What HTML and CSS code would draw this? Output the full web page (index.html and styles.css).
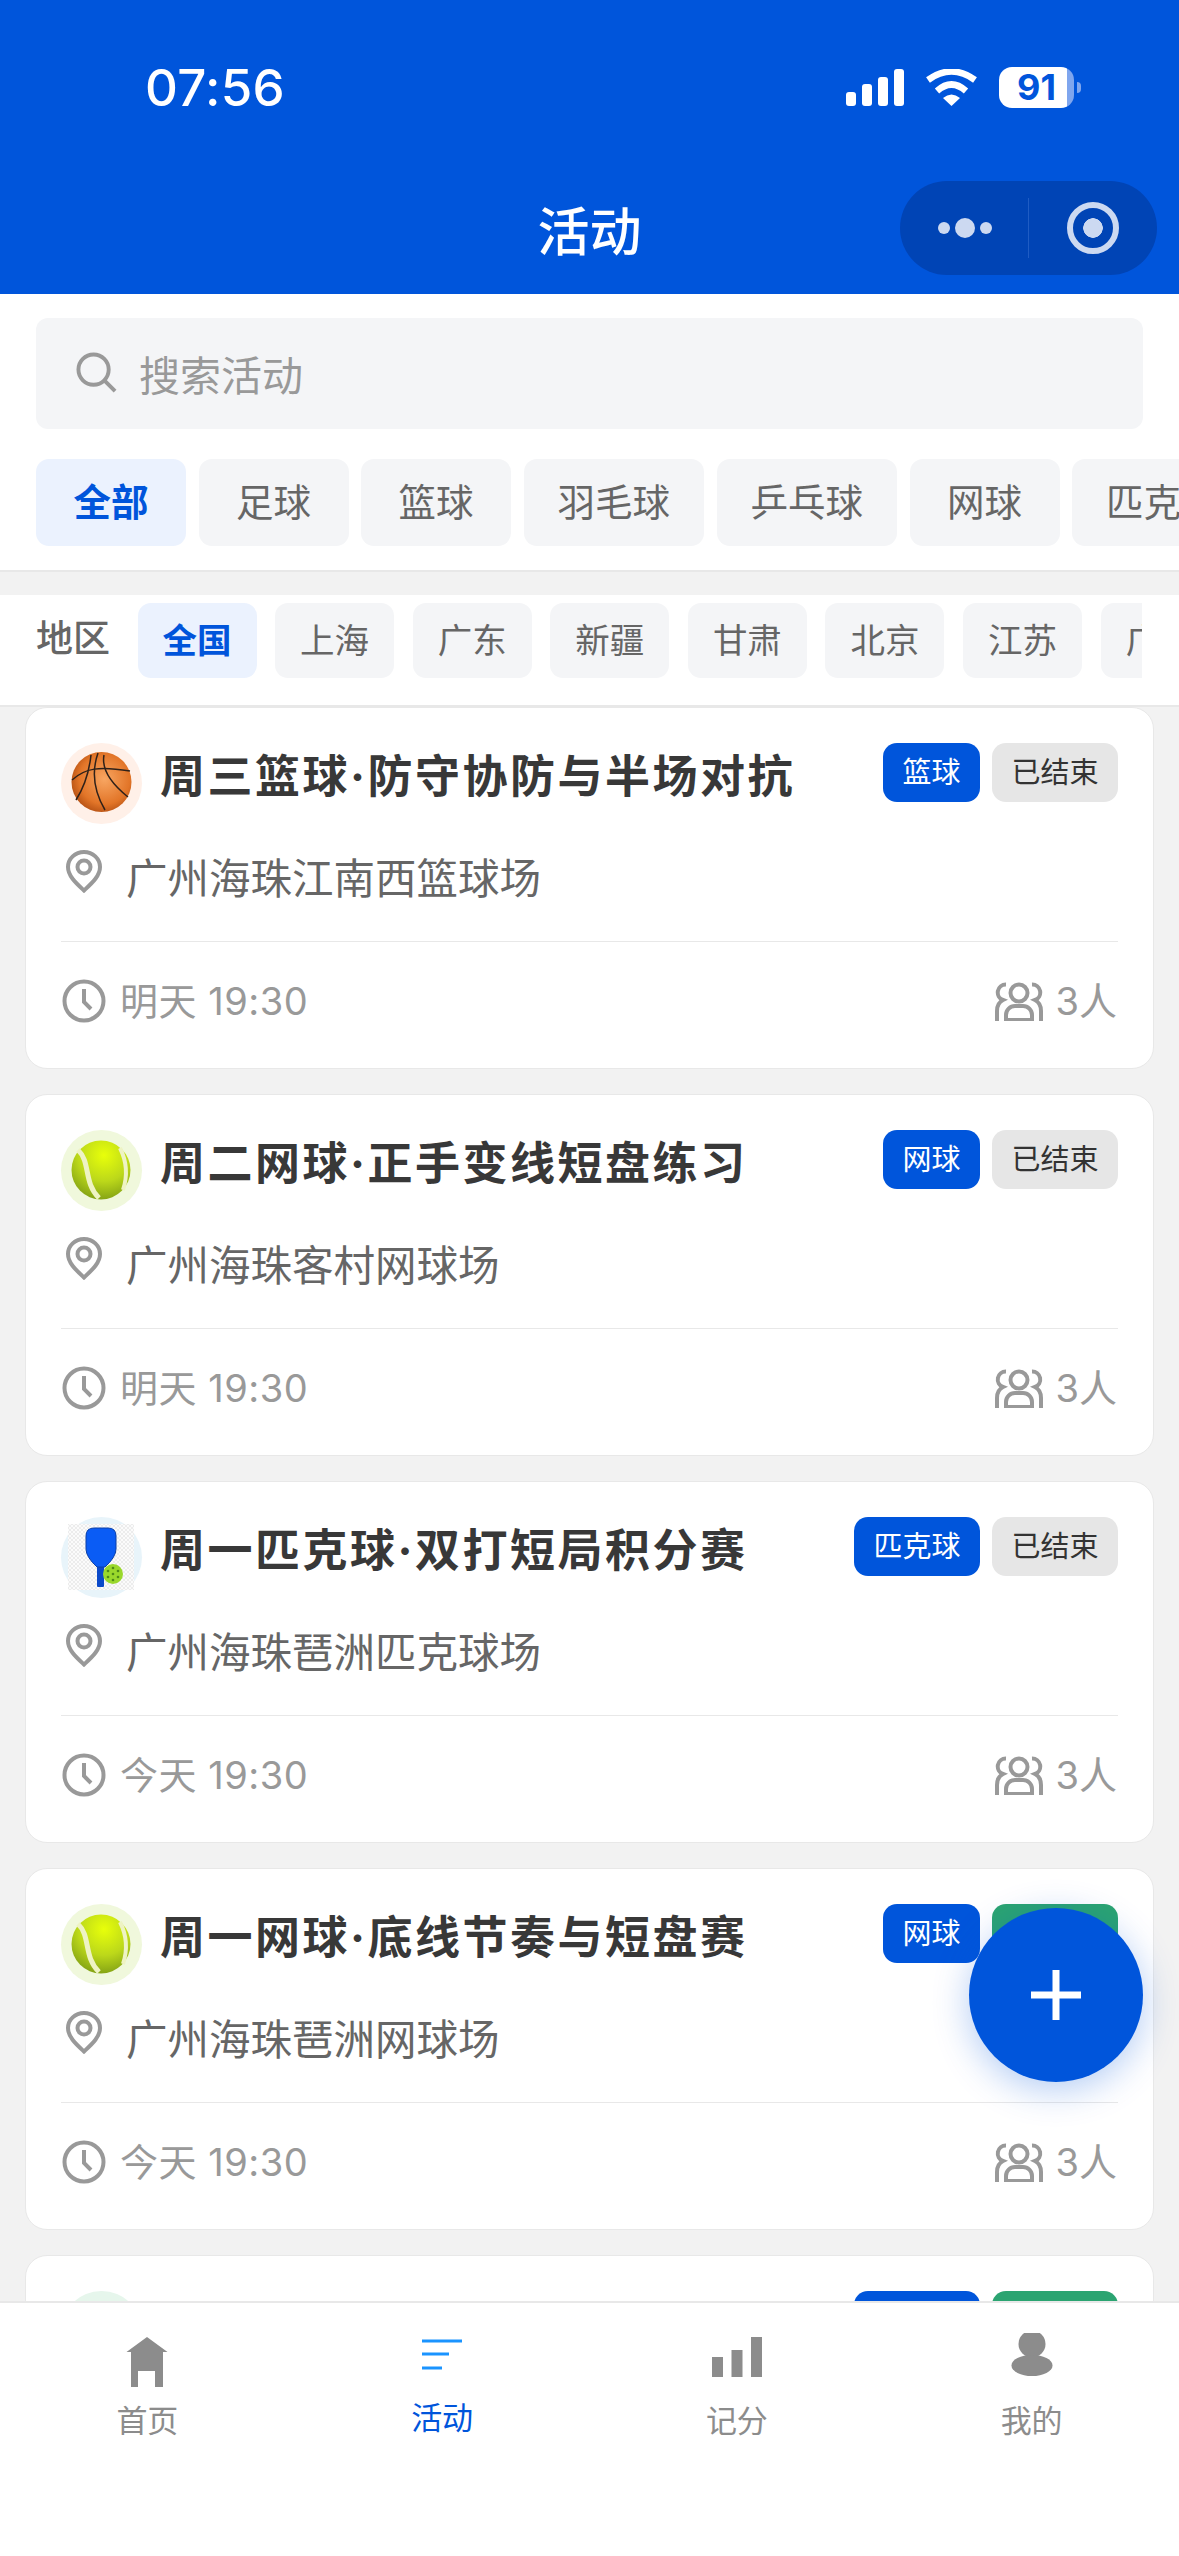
FILE: index.html
```html
<!DOCTYPE html>
<html lang="zh-CN">

<head>
    <meta charset="UTF-8">
    <meta name="viewport" content="width=device-width, initial-scale=1.0">
    <title>活动</title>
    <link rel="stylesheet" href="styles.css">
</head>

<body>
    <!-- shared icons -->
    <svg class="sprite" xmlns="http://www.w3.org/2000/svg">
        <defs>
            <radialGradient id="tennisFill" cx="0.55" cy="0.25" r="0.8">
                <stop offset="0" stop-color="#e8ff0a" />
                <stop offset="0.55" stop-color="#bcd81a" />
                <stop offset="1" stop-color="#7d9c14" />
            </radialGradient>
            <radialGradient id="ballFill" cx="0.55" cy="0.45" r="0.6">
                <stop offset="0" stop-color="#f8a662" />
                <stop offset="0.7" stop-color="#e27528" />
                <stop offset="1" stop-color="#b24e12" />
            </radialGradient>
            <pattern id="checker" width="4" height="4" patternUnits="userSpaceOnUse">
                <rect width="2" height="2" fill="#ececec" />
                <rect x="2" y="2" width="2" height="2" fill="#ececec" />
                <rect x="2" width="2" height="2" fill="#fbfbfb" />
                <rect y="2" width="2" height="2" fill="#fbfbfb" />
            </pattern>
        </defs>
        <symbol id="tennis" viewBox="0 0 81 81">
            <circle cx="40" cy="40" r="29.5" fill="url(#tennisFill)" />
            <path d="M17 20C30 32 22 52 38 68" fill="none" stroke="#eef3c4" stroke-width="5" />
            <path d="M59 18C67 34 66 48 62 60" fill="none" stroke="#eef3c4" stroke-width="4" />
        </symbol>
        <symbol id="pin" viewBox="0 0 46 43">
            <path d="M23 40.500C15 33 7 26 7 17A16 15 0 0 1 39 17C39 26 31 33 23 40.500Z" fill="none" stroke="#999" stroke-width="4" />
            <circle cx="23" cy="17" r="6.500" fill="none" stroke="#999" stroke-width="4" />
        </symbol>
        <symbol id="clock" viewBox="0 0 46 44">
            <circle cx="23" cy="22" r="19.500" fill="none" stroke="#999" stroke-width="4" />
            <path d="M23 10V23L30 30" fill="none" stroke="#999" stroke-width="4" />
        </symbol>
        <symbol id="users" viewBox="0 0 48 39">
            <g fill="none" stroke="#999" stroke-width="4">
                <circle cx="24" cy="11" r="8.500" />
                <path d="M11 38V33A9 9 0 0 1 20 24H28A9 9 0 0 1 37 33V38Z" />
                <path d="M11 2.500A8 8 0 0 0 8 18C4 20 2 24 2 29V39" />
                <path d="M37 2.500A8 8 0 0 1 40 18C44 20 46 24 46 29V39" />
            </g>
        </symbol>
    </svg>

    <div class="page">
        <header class="top">
            <div class="status">
                <span class="clock-time">07:56</span>
                <div class="status-icons">
                    <svg class="signal" viewBox="0 0 58 37">
                        <rect y="23" width="10" height="14" rx="3" fill="#fff" />
                        <rect x="16" y="15" width="10" height="22" rx="3" fill="#fff" />
                        <rect x="32" y="8" width="10" height="29" rx="3" fill="#fff" />
                        <rect x="48" width="10" height="37" rx="3" fill="#fff" />
                    </svg>
                    <svg class="wifi" viewBox="0 0 51 37">
                        <path d="M2 11Q25.500 -6 49 11" fill="none" stroke="#fff" stroke-width="6.500" />
                        <path d="M11 22Q25.500 9 40 22" fill="none" stroke="#fff" stroke-width="6.500" />
                        <path d="M17 29Q25.500 22 34 29L25.500 37Z" fill="#fff" />
                    </svg>
                    <div class="battery">
                        <div class="battery-body">91</div>
                        <div class="battery-nub"></div>
                    </div>
                </div>
            </div>
            <div class="navbar">
                <h1 class="nav-title">活动</h1>
                <div class="capsule">
                    <div class="capsule-dots">
                        <span class="dot"></span>
                        <span class="dot dot-big"></span>
                        <span class="dot"></span>
                    </div>
                    <div class="capsule-line"></div>
                    <div class="capsule-ring"></div>
                </div>
            </div>
        </header>

        <section class="filters">
            <div class="search">
                <svg class="search-icon" viewBox="0 0 42 42">
                    <circle cx="18" cy="18" r="15.500" fill="none" stroke="#999" stroke-width="4" />
                    <path d="M29 29L40 40" stroke="#999" stroke-width="4" />
                </svg>
                <span>搜索活动</span>
            </div>
            <div class="sport-tabs">
                <div class="chip active">全部</div>
                <div class="chip">足球</div>
                <div class="chip">篮球</div>
                <div class="chip">羽毛球</div>
                <div class="chip">乒乓球</div>
                <div class="chip">网球</div>
                <div class="chip">匹克球</div>
            </div>
        </section>

        <section class="region">
            <span class="region-label">地区</span>
            <div class="region-tabs">
                <div class="rchip active">全国</div>
                <div class="rchip">上海</div>
                <div class="rchip">广东</div>
                <div class="rchip">新疆</div>
                <div class="rchip">甘肃</div>
                <div class="rchip">北京</div>
                <div class="rchip">江苏</div>
                <div class="rchip">广西</div>
            </div>
        </section>

        <main class="list">
            <article class="card">
                <div class="card-head">
                    <div class="sport-icon bg-orange">
                        <svg viewBox="0 0 81 81">
                            <circle cx="40.500" cy="39" r="30" fill="url(#ballFill)" />
                            <g fill="none" stroke="#2f2119" stroke-width="1.500">
                                <path d="M30 12C28 30 22 46 15 57" />
                                <path d="M37 10C30 30 34 50 44 67" />
                                <path d="M11 37C24 25 38 23 69 28" />
                                <path d="M43 12C40 28 52 42 67 54" />
                            </g>
                        </svg>
                    </div>
                    <h2 class="card-title">周三篮球·防守协防与半场对抗</h2>
                    <div class="tags">
                        <span class="tag tag-blue">篮球</span>
                        <span class="tag tag-gray">已结束</span>
                    </div>
                </div>
                <div class="card-place">
                    <svg class="pin"><use href="#pin" /></svg>
                    <span>广州海珠江南西篮球场</span>
                </div>
                <div class="card-foot">
                    <div class="foot-time">
                        <svg class="clock"><use href="#clock" /></svg>
                        <span>明天 19:30</span>
                    </div>
                    <div class="foot-people">
                        <svg class="users"><use href="#users" /></svg>
                        <span>3人</span>
                    </div>
                </div>
            </article>

            <article class="card">
                <div class="card-head">
                    <div class="sport-icon bg-lime">
                        <svg><use href="#tennis" /></svg>
                    </div>
                    <h2 class="card-title">周二网球·正手变线短盘练习</h2>
                    <div class="tags">
                        <span class="tag tag-blue">网球</span>
                        <span class="tag tag-gray">已结束</span>
                    </div>
                </div>
                <div class="card-place">
                    <svg class="pin"><use href="#pin" /></svg>
                    <span>广州海珠客村网球场</span>
                </div>
                <div class="card-foot">
                    <div class="foot-time">
                        <svg class="clock"><use href="#clock" /></svg>
                        <span>明天 19:30</span>
                    </div>
                    <div class="foot-people">
                        <svg class="users"><use href="#users" /></svg>
                        <span>3人</span>
                    </div>
                </div>
            </article>

            <article class="card">
                <div class="card-head">
                    <div class="sport-icon bg-sky">
                        <svg viewBox="0 0 81 81">
                            <rect x="7" y="7" width="66" height="66" fill="url(#checker)" />
                            <rect x="36" y="48" width="7" height="22" rx="1" fill="#0b49c9" />
                            <path d="M25 19Q25 11 33 11H47Q55 11 55 19V32Q55 40 44 50H36Q25 40 25 32Z" fill="#0a5cf5" stroke="#0a3fa8" stroke-width="1" />
                            <circle cx="52" cy="57" r="10" fill="#9ad82c" />
                            <g fill="#4f8a18">
                                <circle cx="47" cy="54" r="1.300" />
                                <circle cx="52" cy="51" r="1.300" />
                                <circle cx="57" cy="54" r="1.300" />
                                <circle cx="52" cy="57" r="1.300" />
                                <circle cx="47" cy="60" r="1.300" />
                                <circle cx="57" cy="60" r="1.300" />
                                <circle cx="52" cy="63" r="1.300" />
                            </g>
                        </svg>
                    </div>
                    <h2 class="card-title">周一匹克球·双打短局积分赛</h2>
                    <div class="tags">
                        <span class="tag tag-blue">匹克球</span>
                        <span class="tag tag-gray">已结束</span>
                    </div>
                </div>
                <div class="card-place">
                    <svg class="pin"><use href="#pin" /></svg>
                    <span>广州海珠琶洲匹克球场</span>
                </div>
                <div class="card-foot">
                    <div class="foot-time">
                        <svg class="clock"><use href="#clock" /></svg>
                        <span>今天 19:30</span>
                    </div>
                    <div class="foot-people">
                        <svg class="users"><use href="#users" /></svg>
                        <span>3人</span>
                    </div>
                </div>
            </article>

            <article class="card">
                <div class="card-head">
                    <div class="sport-icon bg-lime">
                        <svg><use href="#tennis" /></svg>
                    </div>
                    <h2 class="card-title">周一网球·底线节奏与短盘赛</h2>
                    <div class="tags">
                        <span class="tag tag-blue">网球</span>
                        <span class="tag tag-green tag-wide"></span>
                    </div>
                </div>
                <div class="card-place">
                    <svg class="pin"><use href="#pin" /></svg>
                    <span>广州海珠琶洲网球场</span>
                </div>
                <div class="card-foot">
                    <div class="foot-time">
                        <svg class="clock"><use href="#clock" /></svg>
                        <span>今天 19:30</span>
                    </div>
                    <div class="foot-people">
                        <svg class="users"><use href="#users" /></svg>
                        <span>3人</span>
                    </div>
                </div>
            </article>

            <!-- only the top of this one shows above the tab bar -->
            <article class="card">
                <div class="card-head">
                    <div class="sport-icon bg-mint">
                        <svg viewBox="0 0 81 81">
                            <circle cx="40.500" cy="40" r="30" fill="#ffc62e" />
                        </svg>
                    </div>
                    <div class="card-title"></div>
                    <div class="tags">
                        <span class="tag tag-blue tag-wide"></span>
                        <span class="tag tag-green tag-wide"></span>
                    </div>
                </div>
            </article>
        </main>

        <nav class="tabbar">
            <div class="tab">
                <svg class="tab-icon" viewBox="0 0 60 60">
                    <path d="M30 4L50.500 19H46V54H38V38H21V54H14V19H9.500Z" fill="#8c8c8c" />
                </svg>
                <span class="tab-text">首页</span>
            </div>
            <div class="tab tab-on">
                <svg class="tab-icon" viewBox="0 0 60 60">
                    <path d="M10 8H50M10 21H37M10 35H30" stroke="#1a94ff" stroke-width="3" />
                </svg>
                <span class="tab-text">活动</span>
            </div>
            <div class="tab">
                <svg class="tab-icon" viewBox="0 0 60 60">
                    <rect x="5" y="24" width="11" height="20" fill="#8c8c8c" />
                    <rect x="24.500" y="17" width="11" height="27" fill="#8c8c8c" />
                    <rect x="44" y="4" width="11" height="40" fill="#8c8c8c" />
                </svg>
                <span class="tab-text">记分</span>
            </div>
            <div class="tab">
                <svg class="tab-icon" viewBox="0 0 60 60">
                    <circle cx="30" cy="11" r="13.500" fill="#8c8c8c" />
                    <ellipse cx="30" cy="32.500" rx="20.500" ry="10.500" fill="#8c8c8c" />
                </svg>
                <span class="tab-text">我的</span>
            </div>
        </nav>

        <button class="fab" type="button" aria-label="新建活动">
            <svg viewBox="0 0 52 52">
                <path d="M26 1V51M1 26H51" stroke="#fff" stroke-width="7" />
            </svg>
        </button>
    </div>
</body>

</html>
```

FILE: styles.css
```css
* {
    margin: 0;
    padding: 0;
    box-sizing: border-box;
}

body {
    background: #f2f2f2;
    font-family: Inter, "Noto Sans CJK SC", sans-serif;
    color: #333;
}

.sprite {
    display: block;
    width: 0;
    height: 0;
}

.page {
    position: relative;
    display: flex;
    flex-direction: column;
    width: 1179px;
    height: 2556px;
    overflow: hidden;
    background: #f2f2f2;
}

/* blue header */
.top {
    flex-shrink: 0;
    height: 294px;
    background: #0055db;
    color: #fff;
}

.status {
    display: flex;
    align-items: center;
    justify-content: space-between;
    height: 57px;
    margin-top: 59px;
    padding: 0 98px 0 145px;
}

.clock-time {
    font-size: 51px;
    font-weight: 500;
    letter-spacing: 0.3px;
}

.status-icons {
    display: flex;
    align-items: center;
    gap: 22px;
}

.signal {
    width: 58px;
    height: 37px;
}

.wifi {
    width: 51px;
    height: 37px;
}

.battery {
    display: flex;
    align-items: center;
    gap: 3px;
}

.battery-body {
    width: 75px;
    height: 41px;
    border-radius: 13px;
    background: linear-gradient(90deg, #fff 91%, #7fa6ee 91%);
    color: #0055db;
    font-size: 36px;
    font-weight: 700;
    line-height: 41px;
    text-align: center;
}

.battery-nub {
    width: 4px;
    height: 11px;
    border-radius: 0 4px 4px 0;
    background: #7fa6ee;
}

.navbar {
    display: grid;
    grid-template-columns: 1fr auto 1fr;
    align-items: center;
    height: 94px;
    margin-top: 65px;
    padding: 0 22px;
}

.nav-title {
    grid-column: 2;
    font-size: 52px;
    font-weight: 500;
}

.capsule {
    grid-column: 3;
    justify-self: end;
    display: flex;
    align-items: center;
    width: 257px;
    height: 94px;
    border-radius: 47px;
    background: #0044b5;
}

.capsule-dots {
    display: flex;
    align-items: center;
    justify-content: center;
    gap: 5px;
    width: 128px;
    padding-left: 2px;
}

.dot {
    width: 12px;
    height: 12px;
    border-radius: 50%;
    background: #ccd9f1;
}

.dot-big {
    width: 20px;
    height: 20px;
}

.capsule-line {
    width: 1px;
    height: 60px;
    background: #1f5cc4;
}

.capsule-ring {
    width: 52px;
    height: 52px;
    margin-left: 38px;
    border: 6px solid #ccd9f1;
    border-radius: 50%;
    background: radial-gradient(circle, #ccd9f1 0 9.5px, transparent 10px);
}

/* search + sports */
.filters {
    flex-shrink: 0;
    height: 278px;
    padding: 24px 0 0 36px;
    background: #fff;
    border-bottom: 2px solid #e8e8e8;
}

.search {
    display: flex;
    align-items: center;
    gap: 22px;
    width: 1107px;
    height: 111px;
    padding: 0 0 2px 40px;
    border-radius: 12px;
    background: #f4f5f7;
    color: #999;
    font-size: 41px;
}

.search-icon {
    width: 41px;
    height: 41px;
}

.sport-tabs {
    display: flex;
    gap: 12.500px;
    margin-top: 30px;
}

.chip {
    flex-shrink: 0;
    min-width: 150px;
    height: 87px;
    padding: 0 34px;
    border-radius: 13px;
    background: #f4f5f7;
    color: #666;
    font-size: 37.500px;
    line-height: 87px;
    text-align: center;
}

.chip.active {
    background: #ebf2fe;
    color: #0055db;
    font-weight: 700;
}

/* region row */
.region {
    flex-shrink: 0;
    display: flex;
    gap: 27.500px;
    height: 112px;
    margin-top: 23px;
    padding: 8px 37px 0 36px;
    background: #fff;
    border-bottom: 2px solid #e8e8e8;
}

.region-label {
    flex-shrink: 0;
    color: #666;
    font-size: 37px;
    font-weight: 500;
    line-height: 72px;
}

.region-tabs {
    display: flex;
    gap: 18.600px;
    overflow: hidden;
}

.rchip {
    flex-shrink: 0;
    width: 119px;
    height: 75px;
    border-radius: 13px;
    background: #f4f5f7;
    color: #666;
    font-size: 34.500px;
    line-height: 75px;
    text-align: center;
}

.rchip.active {
    background: #ebf2fe;
    color: #0055db;
    font-weight: 700;
}

/* activity cards */
.list {
    flex: 1;
    min-height: 0;
    display: flex;
    flex-direction: column;
    gap: 25px;
    padding: 0 25px;
    overflow: hidden;
}

.card {
    flex-shrink: 0;
    height: 362px;
    padding: 35px 35px 0;
    border: 1px solid #e8e8e8;
    border-radius: 22px;
    background: #fff;
}

.card-head {
    display: flex;
    align-items: flex-start;
    height: 81px;
}

.sport-icon {
    flex-shrink: 0;
    width: 81px;
    height: 81px;
    margin-right: 18px;
    border-radius: 50%;
}

.sport-icon svg {
    display: block;
    width: 81px;
    height: 81px;
}

.bg-orange {
    background: #fff0e8;
}

.bg-lime {
    background: #f0f8dc;
}

.bg-sky {
    background: #e8f4fa;
}

.bg-mint {
    background: #e6f6ec;
}

.card-title {
    flex: 1;
    color: #383838;
    font-size: 45px;
    font-weight: 700;
    letter-spacing: 2.5px;
    line-height: 68px;
    white-space: nowrap;
}

.tags {
    display: flex;
    flex-shrink: 0;
    gap: 12px;
}

.tag {
    height: 59px;
    padding: 0 19.500px;
    border-radius: 14px;
    font-size: 29px;
    line-height: 59px;
}

.tag-wide {
    width: 126px;
}

.tag-blue {
    background: #0055db;
    color: #fff;
}

.tag-gray {
    background: #e6e6e6;
    color: #333;
}

.tag-green {
    background: #2ba471;
    color: #fff;
}

.card-place {
    display: flex;
    align-items: flex-start;
    gap: 19px;
    height: 60px;
    margin-top: 26px;
    color: #666;
    font-size: 41.500px;
    line-height: 58px;
}

.pin {
    width: 46px;
    height: 43px;
}

.card-foot {
    display: flex;
    align-items: center;
    justify-content: space-between;
    height: 90px;
    margin-top: 31px;
    padding-top: 29px;
    border-top: 1px solid #e8e8e8;
    color: #999;
    font-size: 38px;
}

.foot-time,
.foot-people {
    display: flex;
    align-items: center;
}

.foot-time {
    gap: 13px;
    letter-spacing: 0.5px;
}

.foot-people {
    gap: 13px;
}

.foot-time span,
.foot-people span {
    padding-bottom: 6px;
}

.clock {
    width: 46px;
    height: 44px;
}

.users {
    width: 48px;
    height: 39px;
}

.foot-people span {
    padding-right: 1px;
}

/* tab bar */
.tabbar {
    flex-shrink: 0;
    display: grid;
    grid-template-columns: repeat(4, 1fr);
    height: 255px;
    padding-top: 30px;
    background: #fff;
    border-top: 2px solid #e8e8e8;
}

.tab {
    display: flex;
    flex-direction: column;
    align-items: center;
}

.tab-icon {
    width: 60px;
    height: 60px;
}

.tab-text {
    margin-top: 10px;
    color: #8c8c8c;
    font-size: 31px;
    line-height: 36px;
}

.tab-on .tab-text {
    margin-top: 7px;
    color: #0055db;
}

.fab {
    position: absolute;
    top: 1908px;
    right: 36px;
    display: flex;
    align-items: center;
    justify-content: center;
    width: 174px;
    height: 174px;
    border: 0;
    border-radius: 50%;
    background: #0055db;
    box-shadow: 0 8px 36px rgba(0, 85, 219, 0.3);
}

.fab svg {
    width: 52px;
    height: 52px;
}
```
